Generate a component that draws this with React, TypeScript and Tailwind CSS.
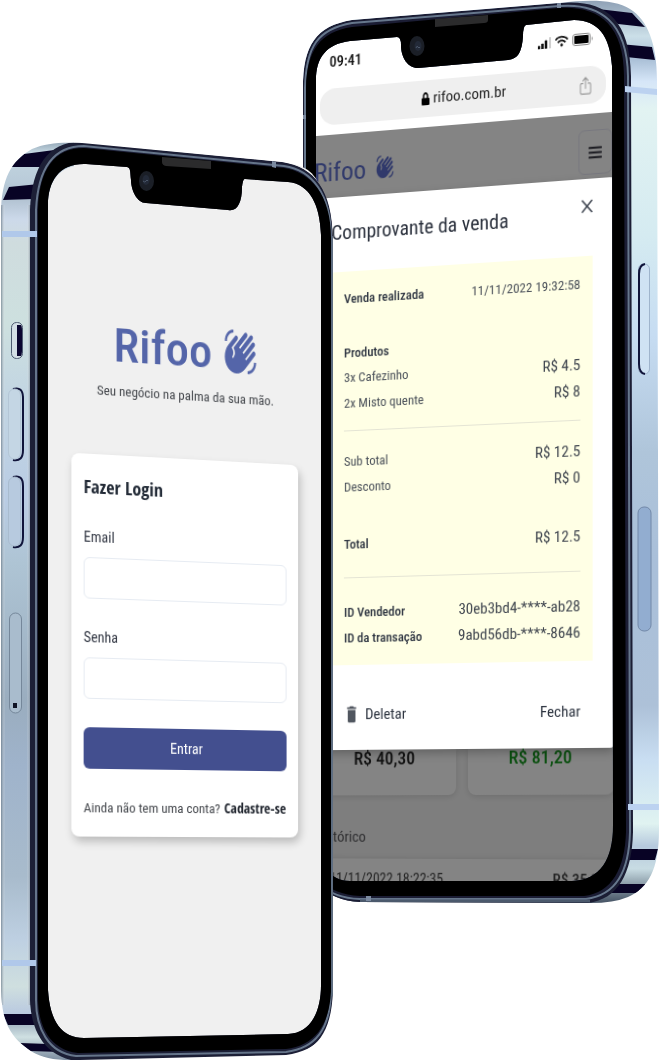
import type { ReactNode } from "react";
import { FaBars, FaLock, FaWifi } from "react-icons/fa";
import { IoShareOutline } from "react-icons/io5";
import { MdDelete, MdWavingHand } from "react-icons/md";

function FrontFrame() {
  return (
    <svg className="pointer-events-none z-10 col-start-1 row-start-1 h-[919px] w-[333px]" viewBox="0 141 333 919" aria-hidden="true">
      <defs>
        <linearGradient id="fSide" gradientUnits="userSpaceOnUse" x1="0" y1="141" x2="0" y2="1060">
          <stop offset="0" stopColor="#8fa2b3" />
          <stop offset="0.012" stopColor="#c3d6e0" />
          <stop offset="0.045" stopColor="#b9cbd9" />
          <stop offset="0.06" stopColor="#aebfce" />
          <stop offset="0.085" stopColor="#ccd9ea" />
          <stop offset="0.11" stopColor="#cfdcde" />
          <stop offset="0.2" stopColor="#cde0df" />
          <stop offset="0.27" stopColor="#c3d6e2" />
          <stop offset="0.39" stopColor="#b9cce4" />
          <stop offset="0.46" stopColor="#aec4d4" />
          <stop offset="0.61" stopColor="#9aadbf" />
          <stop offset="0.68" stopColor="#9fb3cb" />
          <stop offset="0.8" stopColor="#a8bbcc" />
          <stop offset="0.87" stopColor="#bed0e2" />
          <stop offset="0.92" stopColor="#cfdfdf" />
          <stop offset="0.95" stopColor="#b9c9e0" />
          <stop offset="0.96" stopColor="#a3b4c2" />
          <stop offset="0.975" stopColor="#cfe0e2" />
          <stop offset="1" stopColor="#7d8da0" />
        </linearGradient>
        <linearGradient id="fShade" x1="0" x2="1" y1="0" y2="0">
          <stop offset="0" stopColor="#5f7180" stopOpacity="0.7" />
          <stop offset="0.15" stopColor="#ffffff" stopOpacity="0" />
          <stop offset="0.85" stopColor="#ffffff" stopOpacity="0" />
          <stop offset="1" stopColor="#506070" stopOpacity="0.7" />
        </linearGradient>
        <clipPath id="fBody">
          <path d="M1 215C1 178 12 160 32 149C46 143 60 142 82 143L282 162C315 167 333 190 333 238V992C333 1032 320 1050 286 1055L80 1060C56 1061 40 1058 28 1049C8 1035 1 1018 1 985Z" />
        </clipPath>
      </defs>
      <g clipPath="url(#fBody)" fillRule="evenodd">
        <path d="M0 141H74V1060H0ZM48 205V990C50 1022 58 1034 74 1038V166C56 170 48 186 48 205Z" fill="url(#fSide)" />
        <rect x="1" y="205" width="30" height="800" fill="url(#fShade)" />
        <path d="M10 167L24 154L62 149L46 167Z" fill="#080325" />
        <path d="M3 200L9 187L39 184L34 199Z" fill="#080325" />
        <path d="M3 1014H34L39 1025H8Z" fill="#080325" />
        <path d="M20 1043L48 1044L60 1052L30 1051Z" fill="#080325" />
        <path d="M30 210C32 166 48 142 80 142L284 162C314 167 332 190 333 238V992C331 1032 318 1052 286 1056L76 1061C44 1056 31 1030 30 1000Z M48 205V990C50 1022 62 1038 84 1038L288 1034C312 1033 321 1010 321 985V235C320 205 310 184 288 182L245 179Q243 178 242 187C242 203 237 212 228 210L146 203C137 203 131 190 131 180C130 172 131 168 127 167L86 164C60 163 48 180 48 205Z" fill="#1c1f36" />
        <path d="M36 210C38 168 54 146 84 146L284 166C312 170 331 194 331 238V992C330 1029 316 1048 286 1052L76 1056C48 1053 36 1028 36 1000Z" fill="none" stroke="#65758a" strokeWidth="2" />
        <path d="M38 210C39 170 54 148 84 148L284 168C310 172 331 194 331 238V992C329 1026 314 1046 286 1049L78 1053C50 1050 38 1026 38 998Z M48 205V990C50 1022 62 1038 84 1038L288 1034C312 1033 321 1010 321 985V235C320 205 310 184 288 182L245 179Q243 178 242 187C242 203 237 212 228 210L146 203C137 203 131 190 131 180C130 172 131 168 127 167L86 164C60 163 48 180 48 205Z" fill="#000" />
        <path d="M332 236V996" stroke="#5e6d80" strokeWidth="2" />
        <path d="M2 231H37V237H2Z M2 960H36V966H2Z" fill="#b0c8ea" />
        <path d="M272 161L276 162V168L272 167Z" fill="#7b8aa0" />
      </g>
      <path d="M162 157L211 161V169L166 166Q162 165 162 162Z" fill="#2b2b2c" />
      <ellipse cx="146.500" cy="181" rx="7.500" ry="10" fill="#1b1f27" />
      <ellipse cx="146" cy="180" rx="3.500" ry="5" fill="#232a38" />
      <path d="M143 181q2 2 3 0t2 0" fill="none" stroke="#4a5668" />
      <g strokeWidth="1">
        <rect x="11.500" y="322.500" width="11" height="36" rx="5" fill="#d3dfe5" stroke="#4d5b70" />
        <path d="M17 325H21Q22 326 22 330V350Q22 355 21 356H17Z" fill="#0a0630" />
        <path d="M13 389q10-3 10 9v52q0 12-10 10" fill="none" stroke="#10143a" strokeWidth="2" />
        <path d="M13 477q10-3 10 9v51q0 12-10 10" fill="none" stroke="#10143a" strokeWidth="2" />
        <rect x="8.500" y="389" width="12" height="70" rx="6" fill="#c4d6e4" stroke="#b4c6d6" />
        <rect x="8.500" y="477" width="12" height="69" rx="6" fill="#b7cadf" stroke="#a9bccf" />
        <rect x="9.500" y="613" width="12" height="100" rx="6" fill="#a9bccd" stroke="#75879a" />
      </g>
      <path d="M13 703h4v5h-4Z" fill="#101426" />
    </svg>
  );
}

function BackFrame() {
  const hole =
    "M316 80V835C318 865 330 881 350 881H572C600 880 613 860 613 825L612 66C610 36 598 20 574 20L526 25Q523 26 523 36C522 52 518 59 508 60L418 68C408 68 401 58 401 45Q401 37 397 37L350 41C326 44 316 58 316 80Z";
  return (
    <svg className="pointer-events-none z-10 col-start-1 row-start-1 h-[905px] w-[357px]" viewBox="303 0 357 905" aria-hidden="true">
      <defs>
        <linearGradient id="bSide" gradientUnits="userSpaceOnUse" x1="0" y1="0" x2="0" y2="905">
          <stop offset="0" stopColor="#8ea0b5" />
          <stop offset="0.04" stopColor="#cbdfe8" />
          <stop offset="0.065" stopColor="#a9bfd6" />
          <stop offset="0.09" stopColor="#d6e6f8" />
          <stop offset="0.12" stopColor="#e2f3f2" />
          <stop offset="0.26" stopColor="#d5ebf1" />
          <stop offset="0.37" stopColor="#c6dcf2" />
          <stop offset="0.5" stopColor="#afc5da" />
          <stop offset="0.62" stopColor="#a9bfd9" />
          <stop offset="0.78" stopColor="#adc1d8" />
          <stop offset="0.84" stopColor="#c9def2" />
          <stop offset="0.91" stopColor="#e0f3f1" />
          <stop offset="0.935" stopColor="#b6c9dd" />
          <stop offset="0.96" stopColor="#c8dce3" />
          <stop offset="1" stopColor="#3d4a5c" />
        </linearGradient>
        <clipPath id="bBody">
          <path d="M303 88C303 45 316 26 352 20L560 3C590 -1 616 0 630 9C648 20 657 45 657 80L659 830C659 870 648 888 628 897Q614 903 590 903L360 902C325 900 303 880 303 840Z" />
        </clipPath>
      </defs>
      <g clipPath="url(#bBody)" fillRule="evenodd">
        <path d={"M303 0H660V905H303Z " + hole} fill="url(#bSide)" />
        <path d="M598 9L632 13L645 27L618 24Z" fill="#080325" />
        <path d="M620 44L652 47L655 60L626 57Z" fill="#080325" />
        <path d="M629 849H658L655 860H626Z" fill="#080325" />
        <path d="M618 884L648 884L640 893L600 893Z" fill="#080325" />
        <path d={"M303 88C303 45 316 26 352 20L560 3C602 -1 630 16 631 76L633 832C632 874 618 899 588 903L360 903C325 900 303 880 303 840Z " + hole} fill="#1b1d34" />
        <path d="M305 88C306 46 318 29 352 23L560 6C600 3 627 22 628 76L630 832C629 872 616 895 586 899H360C325 898 305 878 305 840Z" fill="none" stroke="#66778c" strokeWidth="2" />
        <path d={"M306 88C307 50 320 32 352 27L560 8C598 6 624 24 624 76L626 832C625 868 612 893 584 896H360C325 894 306 874 306 840Z " + hole} fill="#000" />
        <path d="M360 901H590" stroke="#4b596c" strokeWidth="3" />
        <path d="M625 86L657 89V95L625 92Z M628 804H659V810H628Z" fill="#bcd2f0" />
        <path d="M557 3H561V8H557Z M303 115H306V119H303Z M366 896H371V901H366Z" fill="#7b8aa0" />
      </g>
      <path d="M435 19L488 15V20Q488 23 484 23L435 27Z" fill="#2b2b2c" />
      <ellipse cx="417" cy="46" rx="7.500" ry="10" fill="#1b1f27" />
      <ellipse cx="418" cy="46" rx="3.500" ry="5" fill="#232a38" />
      <path d="M416 48q1-3 2-1t2 0" fill="none" stroke="#4a5668" />
      <rect x="638.500" y="264" width="11" height="110" rx="5" fill="#cfe2f3" stroke="#9fb4cc" />
      <path d="M645 264q-6 1-6 10v90q0 9 6 10" fill="none" stroke="#10143a" strokeWidth="2" />
      <rect x="638" y="507" width="13" height="124" rx="6" fill="#92add0" stroke="#7288a8" />
    </svg>
  );
}

function StatusIcons() {
  return (
    <span className="flex items-center gap-1">
      <svg className="h-3 w-[13px]" viewBox="0 0 13 12" aria-hidden="true">
        <path d="M0 9h2v3h-2zM3.500 7h2v5h-2zM7 4h2v8h-2z" fill="#111" stroke="#111" strokeWidth="0.500" />
        <path d="M11 1h2v11h-2z" fill="#cfcfcf" />
      </svg>
      <FaWifi className="h-3 w-[13px]" preserveAspectRatio="none" aria-hidden="true" />
      <svg className="h-3 w-[21px]" viewBox="0 0 21 12" aria-hidden="true">
        <rect x="0.500" y="0.500" width="17" height="11" rx="2.500" fill="none" stroke="#8a8a8a" />
        <rect x="2" y="2" width="14" height="8" rx="1" fill="#000" />
        <path d="M19 4q2 2 0 4z" fill="#8a8a8a" />
      </svg>
    </span>
  );
}

function Row({ label, value, strong, small }: { label: string; value: string; strong?: boolean; small?: boolean }) {
  return (
    <div className="flex h-[26px] items-baseline justify-between leading-5">
      <dt className={strong ? "text-[13px] font-medium text-[#2d3440]" : "text-[13px] text-[#4a5059]"}>{label}</dt>
      <dd className={small ? "text-[13px] text-[#4a5059]" : "text-[15px] text-[#40464f]"}>{value}</dd>
    </div>
  );
}

function SummaryCard({ children, tone }: { children: ReactNode; tone: string }) {
  return (
    <p className={"h-[46px] rounded-b-lg bg-[#848484] text-center text-[18px] font-medium leading-none shadow-[0_2px_6px_rgba(0,0,0,0.12)] " + tone}>
      {children}
    </p>
  );
}

function SalePhone() {
  return (
    <section className="-ml-[30px] grid shrink-0 items-start justify-items-start" aria-label="Comprovante">
      <BackFrame />
      <div className="col-start-1 row-start-1 mt-5 ml-[13px] h-[861px] w-[297px] overflow-hidden bg-white perspective-[1200px] perspective-origin-[148px_800px]">
        <div className="-ml-3 w-[309px] origin-[160px_0] -rotate-y-8 bg-[#7e7e7e] text-[#111]">
          <div className="bg-white pt-[18px] pr-2 pb-[10px] pl-3">
            <div className="flex h-6 items-center justify-between pr-3 pl-[10px]">
              <time className="text-[15px] font-medium">09:41</time>
              <StatusIcons />
            </div>
            <div className="mt-[15px] flex h-[37px] items-center rounded-[16px] bg-[#efefef] pr-3">
              <a href="#site" className="flex flex-1 items-center justify-center gap-1 pl-[34px] text-[15px] text-[#222]">
                <FaLock className="h-[13px] w-2 text-black" preserveAspectRatio="none" aria-hidden="true" />
                rifoo.com.br
              </a>
              <button type="button" aria-label="Compartilhar">
                <IoShareOutline className="h-5 w-4 text-[#999]" preserveAspectRatio="none" />
              </button>
            </div>
          </div>
          <header className="flex h-16 items-start justify-between bg-[#848484] pt-4 pr-[2px] pl-[6px]">
            <div className="mt-1 flex items-center gap-[10px] text-[#30396b]">
              <span className="text-[26px] leading-9">Rifoo</span>
              <MdWavingHand className="mb-1 h-[25px] w-[19px]" preserveAspectRatio="none" aria-hidden="true" />
            </div>
            <button type="button" aria-label="Menu" className="grid h-11 w-[33px] place-items-center rounded-md border border-[#78787f]">
              <FaBars className="h-[15px] w-[13px] text-[#1c1c22]" preserveAspectRatio="none" />
            </button>
          </header>
          <div role="dialog" aria-label="Comprovante da venda" className="relative rounded-sm bg-white pt-[22px] pr-[21px] pb-[26px] pl-6 shadow-[0_4px_10px_rgba(0,0,0,0.25)]">
            <div className="flex items-start justify-between">
              <h2 className="text-[20px] leading-7 text-[#2a303c]">Comprovante da venda</h2>
              <button type="button" aria-label="Fechar janela" className="-mt-1">
                <svg className="h-[18px] w-[11px]" viewBox="0 0 11 18" aria-hidden="true">
                  <path d="M0.500 3L10.500 15M10.500 3L0.500 15" stroke="#333a46" strokeWidth="1.400" />
                </svg>
              </button>
            </div>
            <dl className="mt-[26px] bg-[#ffffe5] pt-[18px] pr-3 pb-3 pl-[13px]">
              <Row label="Venda realizada" value="11/11/2022 19:32:58" strong small />
              <div className="mt-[29px] text-[13px] font-medium leading-5 text-[#2d3440]">Produtos</div>
              <div className="mt-1">
                <Row label="3x Cafezinho" value="R$ 4.5" />
                <Row label="2x Misto quente" value="R$ 8" />
              </div>
              <hr className="mt-3 mb-5 border-[#e4e4d4]" />
              <Row label="Sub total" value="R$ 12.5" />
              <Row label="Desconto" value="R$ 0" />
              <div className="mt-8">
                <Row label="Total" value="R$ 12.5" strong />
              </div>
              <hr className="mt-[18px] mb-6 border-[#e4e4d4]" />
              <Row label="ID Vendedor" value="30eb3bd4-****-ab28" strong />
              <Row label="ID da transação" value="9abd56db-****-8646" strong />
            </dl>
            <div className="mt-10 flex items-center justify-between pr-3 pl-[13px] text-[15px] leading-5 text-[#2d3440]">
              <button type="button" className="flex h-5 items-center gap-[6px]">
                <MdDelete className="h-[22px] w-4 text-[#50565f]" preserveAspectRatio="none" aria-hidden="true" />
                Deletar
              </button>
              <button type="button">Fechar</button>
            </div>
          </div>
          <div className="pl-[6px]">
            <div className="grid grid-cols-2 gap-3">
              <SummaryCard tone="text-[#111]">R$ 40,30</SummaryCard>
              <SummaryCard tone="text-[#0b5010]">R$ 81,20</SummaryCard>
            </div>
            <h3 className="mt-8 text-[15px] leading-5 text-[#2e2e30]">Histórico</h3>
            <div className="mt-3 flex justify-between bg-[#848484] pt-[10px] pr-2 pb-6 pl-4 leading-5 text-[#222] shadow-[0_0_6px_rgba(0,0,0,0.12)]">
              <span className="text-[14px]">11/11/2022 18:22:35</span>
              <span className="text-[15px] font-medium">R$ 35,00</span>
            </div>
          </div>
        </div>
      </div>
    </section>
  );
}

function Field({ id, label, type }: { id: string; label: string; type: string }) {
  return (
    <div className="mt-7">
      <label htmlFor={id} className="block text-[14px] leading-5 text-[#363b47]">{label}</label>
      <input id={id} type={type} className="mt-[10px] block h-[41px] w-full rounded-md border border-[#e6ebf2] bg-white px-3 text-[14px]" />
    </div>
  );
}

function LoginPhone() {
  return (
    <section className="z-20 mt-[141px] grid shrink-0 items-start justify-items-start" aria-label="Login">
      <FrontFrame />
      <div className="col-start-1 row-start-1 mt-[23px] ml-12 h-[874px] w-[273px] overflow-hidden rounded-[32px] bg-[#f0f0f0] perspective-[1050px] perspective-origin-[137px_706px]">
        <div className="rotate-y-8 pt-[156px] pr-5 pl-6">
          <div className="flex items-center justify-center gap-3 text-[#5465a9]">
            <h1 className="text-[47px] font-medium leading-[60px]">Rifoo</h1>
            <MdWavingHand className="mb-1 h-[48px] w-[35px]" preserveAspectRatio="none" aria-hidden="true" />
          </div>
          <p className="mt-[6px] text-center text-[13px] leading-5 text-[#45484d]">Seu negócio na palma da sua mão.</p>
          <form className="mt-[53px] rounded-lg bg-white px-3 pt-5 pb-[18px] shadow-[2px_5px_9px_rgba(0,0,0,0.22)]">
            <h2 className="font-['Open_Sans_Condensed','Roboto_Condensed',sans-serif] text-[18px] font-bold leading-6 text-[#222a36]">Fazer Login</h2>
            <Field id="email" label="Email" type="email" />
            <Field id="senha" label="Senha" type="password" />
            <button type="button" className="mt-7 block h-[41px] w-full rounded-md bg-[#434f8f] text-[14px] text-white">Entrar</button>
            <p className="mt-7 flex items-baseline gap-1 whitespace-nowrap text-[13px] leading-5 text-[#45484d]">
              Ainda não tem uma conta?
              <a href="#cadastro" className="font-['Open_Sans_Condensed','Roboto_Condensed',sans-serif] text-[14px] font-bold text-[#1f242d]">Cadastre-se</a>
            </p>
          </form>
        </div>
      </div>
    </section>
  );
}

export default function App() {
  return (
    <main className="flex items-start overflow-x-hidden bg-white font-['Roboto_Condensed','Liberation_Sans',sans-serif]">
      <LoginPhone />
      <SalePhone />
    </main>
  );
}
